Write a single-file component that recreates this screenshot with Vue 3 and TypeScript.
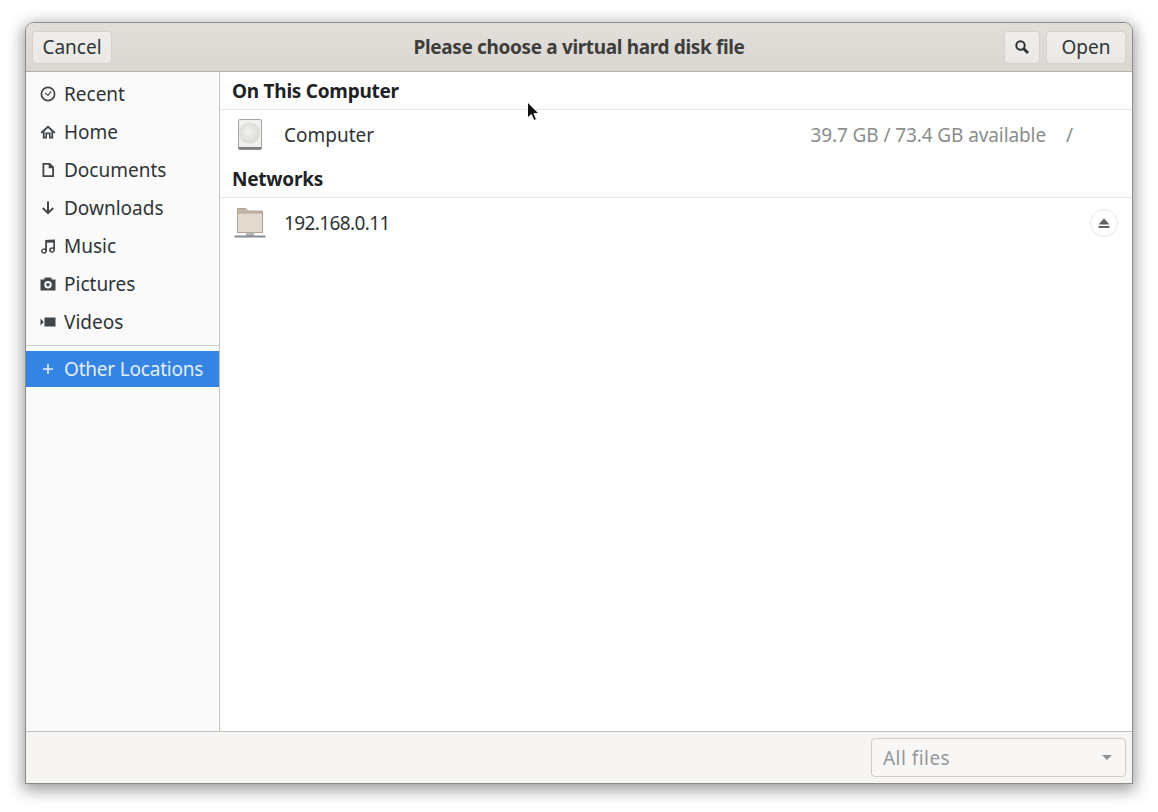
<script setup lang="ts">
interface Place { name: string; icon: string }
const places: Place[] = [
  { name: 'Recent', icon: 'recent' },
  { name: 'Home', icon: 'home' },
  { name: 'Documents', icon: 'doc' },
  { name: 'Downloads', icon: 'down' },
  { name: 'Music', icon: 'music' },
  { name: 'Pictures', icon: 'camera' },
  { name: 'Videos', icon: 'video' },
]
</script>

<template>
  <div class="page">
    <div class="window">
      <header class="header">
        <div class="side">
          <button class="btn cancel">Cancel</button>
        </div>
        <div class="title">Please choose a virtual hard disk file</div>
        <div class="side end">
          <button class="btn icon-btn" aria-label="Search">
            <svg width="16" height="16" viewBox="0 0 16 16" fill="none" stroke="#2e3436">
              <circle cx="6.5" cy="6.5" r="4.2" stroke-width="2" />
              <path d="M9.5 9.5 14 14" stroke-width="2.8" />
            </svg>
          </button>
          <button class="btn open">Open</button>
        </div>
      </header>
      <div class="body">
        <aside class="sidebar">
          <div v-for="p in places" :key="p.name" class="place">
            <svg class="pi" width="16" height="16" viewBox="0 0 16 16" fill="#41464a">
              <g v-if="p.icon === 'recent'" fill="none" stroke="#41464a">
                <circle cx="8" cy="8" r="6.6" stroke-width="1.7" />
                <path d="M5 6.8 8 9.4 11.2 5.4" stroke-width="1.1" />
              </g>
              <path v-else-if="p.icon === 'home'" d="M8 1.5 0.5 8.2 1.6 9.4 2.8 8.4V14.5H7V10.2H9V14.5H13.2V8.4L14.4 9.4 15.5 8.2ZM4.6 12.8V7.2L8 4 11.4 7.2V12.8H10.6V8.6H5.4V12.8Z" fill-rule="evenodd" />
              <path v-else-if="p.icon === 'doc'" d="M2.5 1H10L14 5V15H2.5ZM4.3 2.8V13.2H12.2V6.2H8.7V2.8Z" fill-rule="evenodd" />
              <path v-else-if="p.icon === 'down'" d="M7 1.5H9V10.8L12.5 7.3 13.9 8.7 8 14.6 2.1 8.7 3.5 7.3 7 10.8Z" />
              <path v-else-if="p.icon === 'music'" d="M5.2 2 15 1.5V12A3 2.7 0 1 1 13.3 9.6V4.4L7 4.8V13A3 2.7 0 1 1 5.2 10.6ZM3.9 11.8A1.4 1.2 0 1 0 3.91 14.2 1.4 1.2 0 1 0 3.9 11.8ZM12.1 10.8A1.4 1.2 0 1 0 12.11 13.2 1.4 1.2 0 1 0 12.1 10.8Z" fill-rule="evenodd" />
              <path v-else-if="p.icon === 'camera'" d="M5 1.5H11L12 3.5H15.5V14.5H0.5V3.5H4ZM8 5A3.7 3.7 0 1 0 8.01 12.4 3.7 3.7 0 1 0 8 5ZM8 7A1.7 1.7 0 1 1 7.99 10.4 1.7 1.7 0 1 1 8 7Z" fill-rule="evenodd" />
              <path v-else-if="p.icon === 'video'" d="M4.5 3.5H15.5V12.5H4.5ZM0.5 4.5 3.8 8 0.5 11.5Z" />
            </svg>
            <span>{{ p.name }}</span>
          </div>
          <div class="sep"></div>
          <div class="place active">
            <svg class="pi" width="16" height="16" viewBox="0 0 16 16" fill="#e3eefb">
              <path d="M7.2 3H8.8V7.2H13V8.8H8.8V13H7.2V8.8H3V7.2H7.2Z" />
            </svg>
            <span class="other">Other Locations</span>
          </div>
        </aside>
        <main class="content">
          <h2 class="section">On This Computer</h2>
          <div class="row">
            <svg class="big" width="32" height="32" viewBox="0 0 32 32">
              <defs>
                <radialGradient id="platter" cx="0.45" cy="0.45" r="0.6">
                  <stop offset="0" stop-color="#f2f2f0" />
                  <stop offset="1" stop-color="#d6d6d3" />
                </radialGradient>
              </defs>
              <rect x="4.5" y="0.5" width="23" height="30" rx="1.5" fill="#f0f0ee" stroke="#a3a3a0" />
              <circle cx="15.5" cy="14" r="10.5" fill="url(#platter)" />
              <rect x="5" y="28" width="22" height="2.5" fill="#7a7c7e" />
            </svg>
            <span class="name">Computer</span>
            <span class="space">39.7 GB / 73.4 GB available</span>
            <span class="mount">/</span>
          </div>
          <h2 class="section">Networks</h2>
          <div class="row">
            <svg class="big" width="32" height="32" viewBox="0 0 32 32">
              <path d="M3.5 1.5H12L14 4H28.5V9H3.5Z" fill="#c4b5a6" stroke="#b0a497" />
              <rect x="3.5" y="6" width="25" height="19.5" fill="#e3d9cf" stroke="#b0a497" />
              <rect x="12" y="25.5" width="8" height="3.5" fill="#b4b4b1" />
              <rect x="0.5" y="28.5" width="31" height="2" fill="#8a8b8e" />
            </svg>
            <span class="name ip">192.168.0.11</span>
            <span class="eject">
              <svg width="16" height="16" viewBox="0 0 16 16" fill="#5f6160">
                <path d="M8 3.5 13.5 9.5H2.5Z" />
                <rect x="2.5" y="11" width="11" height="2" />
              </svg>
            </span>
          </div>
          <svg class="cursor" width="14" height="22" viewBox="0 0 14 22">
            <path d="M1.5 1V17L5.3 13.5 8 19.5 10.5 18.4 8 12.6H13Z" fill="#111" stroke="#fff" stroke-width="1" />
          </svg>
        </main>
      </div>
      <footer class="footer">
        <div class="combo">
          <span class="combo-text">All files</span>
          <span class="caret"></span>
        </div>
      </footer>
    </div>
  </div>
</template>

<style>
html, body { background: #fff; }
</style>

<style scoped>
.page {
  width: 1158px;
  height: 812px;
  box-sizing: border-box;
  padding: 23px 26px 29px;
  overflow: hidden;
  font-family: "Noto Sans", sans-serif;
  font-size: 19px;
  color: #2e3436;
}
.window {
  height: 760px;
  display: flex;
  flex-direction: column;
  background: #fff;
  border-radius: 8px 8px 0 0;
  box-shadow: 0 0 0 1px #8b8b88, 0 4px 16px 3px rgba(0, 0, 0, 0.4);
  overflow: hidden;
}
.header {
  height: 49px;
  flex: none;
  box-sizing: border-box;
  display: flex;
  align-items: center;
  padding: 0 6px;
  background: linear-gradient(#e2dfdb, #dad6d2);
  border-bottom: 1px solid #b6b1ab;
}
.side { flex: 1; display: flex; align-items: center; }
.side.end { justify-content: flex-end; gap: 6px; }
.btn {
  height: 33px;
  padding: 0 9px;
  font: inherit;
  color: #2e3436;
  background: linear-gradient(#f0eeec, #eae8e5);
  border: 1px solid #d5d1cc;
  border-radius: 4px;
  display: flex;
  align-items: center;
  justify-content: center;
}
.cancel { width: 80px; padding: 0; }
.title {
  flex: none;
  text-align: center;
  font-weight: 700;
  letter-spacing: -0.35px;
  color: #3d3d3b;
}
.icon-btn { width: 36px; padding: 0; }
.open { width: 80px; padding: 0; }
.body { flex: 1; display: flex; min-height: 0; }
.sidebar {
  width: 194px;
  flex: none;
  box-sizing: border-box;
  padding-top: 3px;
  background: #fbfafa;
  border-right: 1px solid #c6c2bd;
}
.place {
  height: 38px;
  display: flex;
  align-items: center;
  padding-left: 14px;
  color: #2e3436;
}
.pi { flex: none; margin-right: 8px; }
.sep { height: 1px; background: #d6d3cf; margin: 4px 0 5px; }
.place.active { height: 36px; background: #3584e4; color: #e3eefb; }
.other { letter-spacing: -0.2px; }
.content { flex: 1; position: relative; background: #fff; }
.section {
  margin: 0;
  height: 38px;
  box-sizing: border-box;
  padding: 5px 0 0 12px;
  line-height: 28px;
  font-size: 19px;
  font-weight: 700;
  letter-spacing: -0.25px;
  color: #1f2224;
  border-bottom: 1px solid #e6e6e4;
}
.row {
  height: 50px;
  display: flex;
  align-items: center;
  padding-left: 14px;
}
.big { flex: none; margin-right: 18px; }
.name { flex: 1; color: #2e3436; }
.ip { letter-spacing: -0.6px; }
.space { color: #8a8d8c; letter-spacing: -0.1px; }
.mount { width: 86px; padding-left: 20px; box-sizing: border-box; color: #8a8d8c; }
.eject {
  width: 26px;
  height: 26px;
  margin-right: 14px;
  border: 1px solid #e8e8e6;
  border-radius: 50%;
  display: flex;
  align-items: center;
  justify-content: center;
}
.cursor { position: absolute; left: 306px; top: 29px; }
.footer {
  height: 52px;
  flex: none;
  box-sizing: border-box;
  display: flex;
  justify-content: flex-end;
  align-items: center;
  padding-right: 6px;
  background: #f6f5f4;
  border-top: 1px solid #c2bfba;
}
.combo {
  width: 255px;
  height: 39px;
  box-sizing: border-box;
  display: flex;
  align-items: center;
  justify-content: space-between;
  padding: 0 13px 0 11px;
  border: 1px solid #cfccc7;
  border-radius: 4px;
  color: #94979a;
  background: #f8f7f6;
}
.combo-text { letter-spacing: 0.45px; }
.caret {
  width: 0;
  height: 0;
  border-left: 5px solid transparent;
  border-right: 5px solid transparent;
  border-top: 5px solid #8e9192;
}
</style>
